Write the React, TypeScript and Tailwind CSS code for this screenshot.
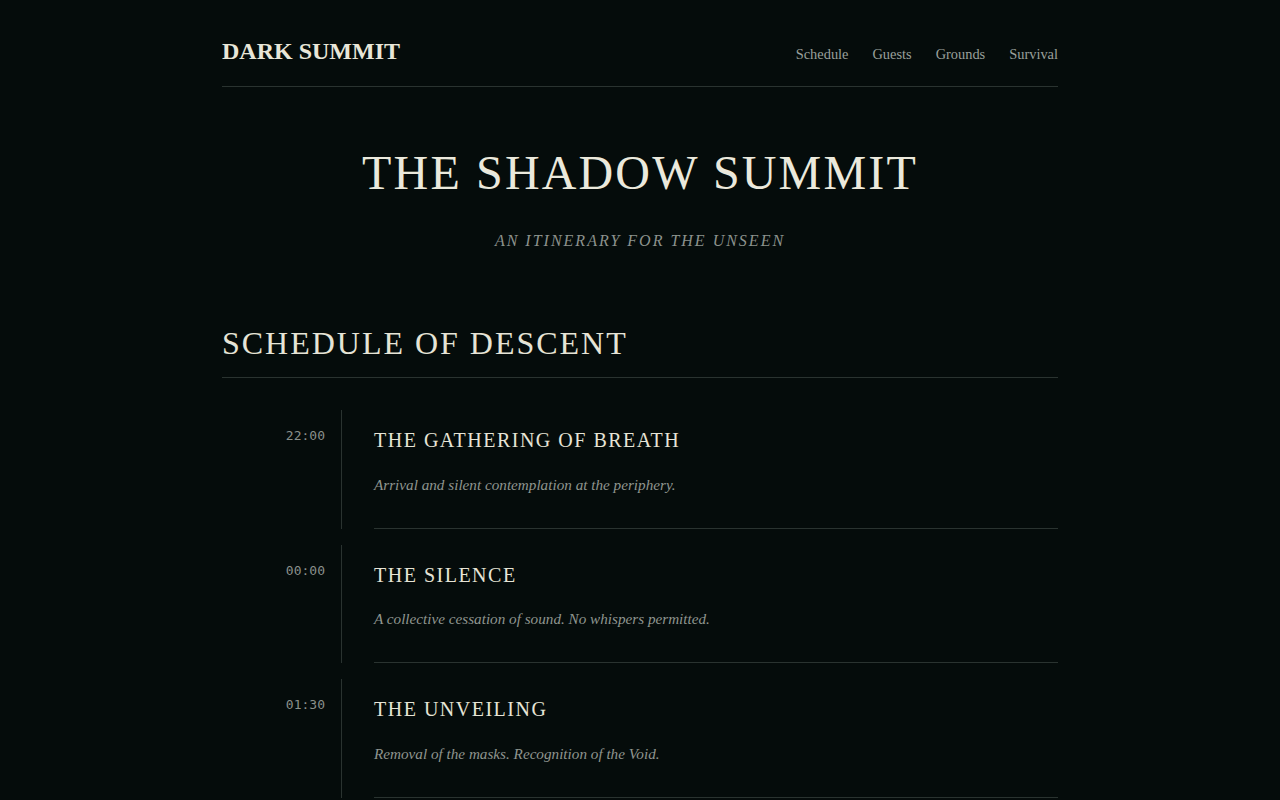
const items = [
  {
    time: "22:00",
    title: "The Gathering of Breath",
    desc: "Arrival and silent contemplation at the periphery.",
  },
  {
    time: "00:00",
    title: "The Silence",
    desc: "A collective cessation of sound. No whispers permitted.",
  },
  {
    time: "01:30",
    title: "The Unveiling",
    desc: "Removal of the masks. Recognition of the Void.",
  },
  {
    time: "03:00",
    title: "The Last Light",
    desc: "Extinguishing of every flame before the dawn.",
  },
];

const serif = "font-['Liberation_Serif','Times_New_Roman',serif]";

export default function App() {
  return (
    <div className={`min-h-screen bg-[#050c0b] text-[#e6e4d6] ${serif}`}>
      <div className="mx-auto w-[836px] pb-24">
        {/* Header */}
        <header className="flex items-baseline justify-between border-b border-[#2a3330] pt-[35px] pb-[19px]">
          <div className="text-2xl font-bold leading-8 text-[#e8e6d8]">DARK SUMMIT</div>
          <nav className="flex items-baseline gap-6 text-[14.4px] leading-5 text-[#9aa09b]">
            <a href="#">Schedule</a>
            <a href="#">Guests</a>
            <a href="#">Grounds</a>
            <a href="#">Survival</a>
          </nav>
        </header>

        {/* Hero */}
        <section className="pt-[62px] text-center">
          <h1 className="text-5xl leading-none tracking-[0.045em] text-[#ebe9dc]">THE SHADOW SUMMIT</h1>
          <p className="mt-8 text-base italic leading-6 tracking-[0.125em] text-[#8c928d]">
            AN ITINERARY FOR THE UNSEEN
          </p>
        </section>

        {/* Schedule */}
        <section className="mt-[70px]">
          <h2 className="border-b border-[#2a3330] pb-[14px] text-[32px] leading-10 tracking-[0.062em] text-[#e6e4d6]">
            SCHEDULE OF DESCENT
          </h2>

          <div className="mt-8 flex flex-col gap-4">
            {items.map((item) => (
              <div key={item.time} className="flex">
                <div className="w-[120px] shrink-0 border-r border-[#2a3330] pr-4 pt-4 text-right font-['DejaVu_Sans_Mono',monospace] text-[13px] leading-5 text-[#8a908b]">
                  {item.time}
                </div>
                <div className="ml-8 flex-1 border-b border-[#2a3330] pt-4 pb-[31px]">
                  <h3 className="text-xl uppercase leading-7 tracking-[0.075em] text-[#e6e4d6]">{item.title}</h3>
                  <p className="mt-[18.5px] text-[15.2px] italic leading-6 text-[#8f958f]">{item.desc}</p>
                </div>
              </div>
            ))}
          </div>
        </section>
      </div>
    </div>
  );
}
